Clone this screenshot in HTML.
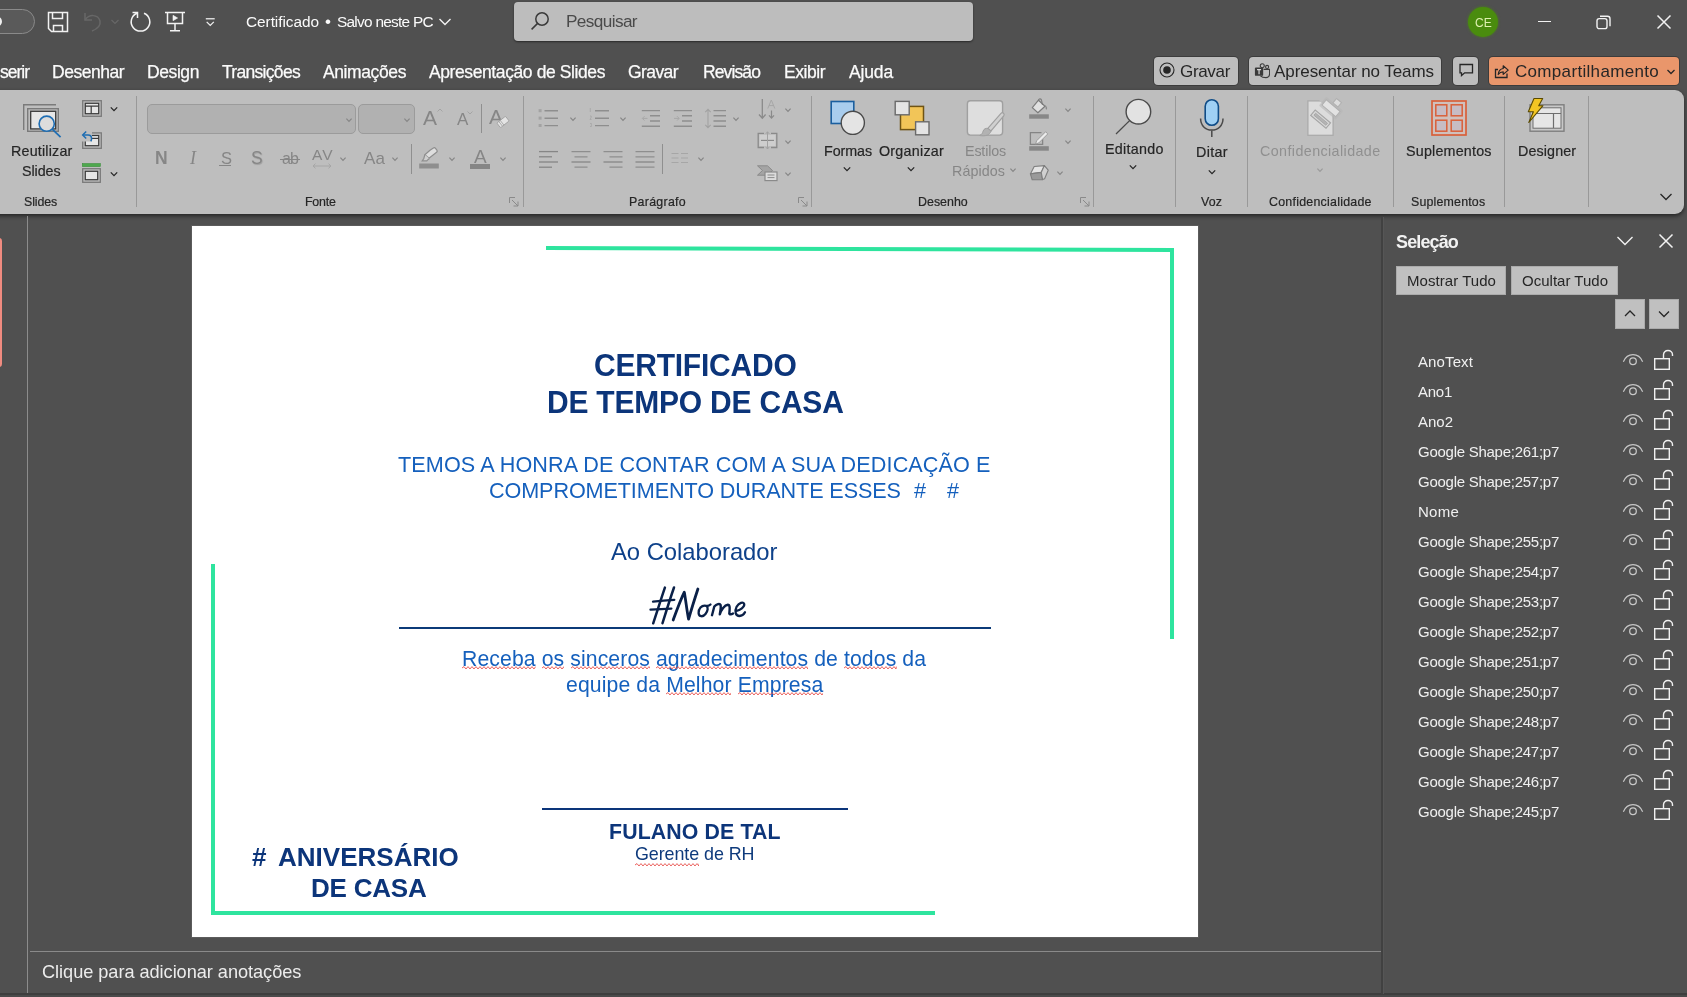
<!DOCTYPE html>
<html><head><meta charset="utf-8"><title>Certificado - PowerPoint</title>
<style>
html,body{margin:0;padding:0;background:#505050;}
body{width:1687px;height:997px;position:relative;overflow:hidden;font-family:"Liberation Sans",sans-serif;-webkit-font-smoothing:antialiased;}
.t{will-change:transform;}
.r{position:absolute;display:block;}
.t{position:absolute;white-space:nowrap;display:block;}
</style></head><body>
<div class="r" style="left:0px;top:0px;width:1687px;height:997px;background:#505050;"></div>
<div class="r" style="left:-10px;top:90px;width:1694px;height:123.7px;background:#bebebe;border-radius:0 9px 9px 0;box-shadow:0 2px 4px rgba(0,0,0,.55);"></div>
<div class="r" style="left:-30px;top:9px;width:64.5px;height:24.5px;background:transparent;border:1px solid #8a8a8a;border-radius:13px;box-sizing:border-box;background:#5a5a5a;"></div>
<div class="r" style="left:-6px;top:17px;width:8px;height:9px;background:#f0f0f0;border-radius:50%;"></div>
<svg class="r" style="left:47px;top:11px;" width="22" height="22" viewBox="0 0 22 22" fill="none"><path d="M1.5 1.5h19v19h-16l-3-3z" stroke="#f2f2f2" stroke-width="1.5"/><path d="M5.5 1.5v6h10v-6M6.5 20.5v-6h9v6" stroke="#f2f2f2" stroke-width="1.5"/></svg>
<svg class="r" style="left:82px;top:11px;" width="24" height="22" viewBox="0 0 24 22" fill="none"><path d="M3 2v7h7" stroke="#676767" stroke-width="1.5"/><path d="M3 9c4-6 13-6 15 1c1 5-3 8-8 10" stroke="#676767" stroke-width="1.5"/></svg>
<svg class="r" style="left:110px;top:18px;" width="10" height="8" viewBox="0 0 10 8" fill="none"><path d="M1.5 2l3.5 3.5l3.5-3.5" stroke="#676767" stroke-width="1.2"/></svg>
<svg class="r" style="left:129px;top:10px;" width="24" height="24" viewBox="0 0 24 24" fill="none"><path d="M8 3.2a9.3 9.3 0 1 0 7 0" stroke="#f2f2f2" stroke-width="1.5"/><path d="M3.5 2.5h5v5.5" stroke="#f2f2f2" stroke-width="1.5"/></svg>
<svg class="r" style="left:164px;top:11px;" width="22" height="22" viewBox="0 0 22 22" fill="none"><path d="M1 1.5h20M3.5 1.5v11h15v-11M11 12.5v7M6 19.7h10" stroke="#f2f2f2" stroke-width="1.5"/><path d="M9 4.300l4.600 2.700l-4.600 2.700z" fill="#f2f2f2" stroke="#f2f2f2" stroke-width=".6"/></svg>
<svg class="r" style="left:204px;top:17px;" width="12.5" height="10.7" viewBox="0 0 14 12" fill="none"><path d="M2 2h10" stroke="#f2f2f2" stroke-width="1.4"/><path d="M3 5.5l4 4l4-4" stroke="#f2f2f2" stroke-width="1.4"/></svg>
<span class="t" style="left:246.00px;top:13.30px;font-size:15.4px;line-height:18px;color:#fbfbfb;letter-spacing:-0.055px;">Certificado</span>
<span class="t" style="left:324.50px;top:12.30px;font-size:17px;line-height:20px;color:#fbfbfb;">•</span>
<span class="t" style="left:337.00px;top:13.30px;font-size:15.4px;line-height:18px;color:#fbfbfb;letter-spacing:-0.725px;">Salvo neste PC</span>
<svg class="r" style="left:438px;top:17px;" width="14" height="10" viewBox="0 0 14 10" fill="none"><path d="M1.5 2l5.5 5.5l5.5-5.5" stroke="#f2f2f2" stroke-width="1.4"/></svg>
<div class="r" style="left:514px;top:2px;width:459px;height:39px;background:#bdbdbd;border-radius:4px;box-shadow:0 1px 2px rgba(0,0,0,.5);"></div>
<svg class="r" style="left:529px;top:10px;" width="22" height="22" viewBox="0 0 22 22" fill="none"><circle cx="13" cy="9" r="6.2" stroke="#3a3a3a" stroke-width="1.5"/><path d="M8.6 13.4l-6 6" stroke="#3a3a3a" stroke-width="1.5"/></svg>
<span class="t" style="left:566.00px;top:11.30px;font-size:17.2px;line-height:21px;color:#4a4a4a;letter-spacing:-0.609px;">Pesquisar</span>
<div class="r" style="left:1468px;top:7px;width:30px;height:30px;background:#4a8c0e;border-radius:50%;box-shadow:0 0 3px rgba(74,140,14,.8);"></div>
<span class="t" style="left:1475.16px;top:15.80px;font-size:12px;line-height:14px;color:#def0b0;">CE</span>
<div class="r" style="left:1538px;top:20.5px;width:12.5px;height:1.1px;background:#f2f2f2;"></div>
<svg class="r" style="left:1596px;top:15px;" width="16" height="15" viewBox="0 0 16 15" fill="none"><rect x="1" y="3.6" width="10" height="10" rx="2.2" stroke="#f2f2f2" stroke-width="1.4"/><path d="M4 1.2h7.5a2.5 2.5 0 0 1 2.5 2.5v7.5" stroke="#f2f2f2" stroke-width="1.4"/></svg>
<svg class="r" style="left:1656px;top:14px;" width="16" height="16" viewBox="0 0 16 16" fill="none"><path d="M1.5 1.5l13 13M14.5 1.5l-13 13" stroke="#f2f2f2" stroke-width="1.5"/></svg>
<span class="t" style="left:0.00px;top:61.70px;font-size:17.5px;line-height:21px;color:#fbfbfb;letter-spacing:-1.005px;-webkit-text-stroke:0.250px #fbfbfb;">serir</span>
<span class="t" style="left:52.00px;top:61.70px;font-size:17.5px;line-height:21px;color:#fbfbfb;letter-spacing:-0.485px;-webkit-text-stroke:0.250px #fbfbfb;">Desenhar</span>
<span class="t" style="left:147.00px;top:61.70px;font-size:17.5px;line-height:21px;color:#fbfbfb;letter-spacing:-0.412px;-webkit-text-stroke:0.250px #fbfbfb;">Design</span>
<span class="t" style="left:222.00px;top:61.70px;font-size:17.5px;line-height:21px;color:#fbfbfb;letter-spacing:-0.694px;-webkit-text-stroke:0.250px #fbfbfb;">Transições</span>
<span class="t" style="left:323.00px;top:61.70px;font-size:17.5px;line-height:21px;color:#fbfbfb;letter-spacing:-0.397px;-webkit-text-stroke:0.250px #fbfbfb;">Animações</span>
<span class="t" style="left:429.00px;top:61.70px;font-size:17.5px;line-height:21px;color:#fbfbfb;letter-spacing:-0.402px;-webkit-text-stroke:0.250px #fbfbfb;">Apresentação de Slides</span>
<span class="t" style="left:628.00px;top:61.70px;font-size:17.5px;line-height:21px;color:#fbfbfb;letter-spacing:-0.581px;-webkit-text-stroke:0.250px #fbfbfb;">Gravar</span>
<span class="t" style="left:703.00px;top:61.70px;font-size:17.5px;line-height:21px;color:#fbfbfb;letter-spacing:-0.889px;-webkit-text-stroke:0.250px #fbfbfb;">Revisão</span>
<span class="t" style="left:784.00px;top:61.70px;font-size:17.5px;line-height:21px;color:#fbfbfb;letter-spacing:-0.460px;-webkit-text-stroke:0.250px #fbfbfb;">Exibir</span>
<span class="t" style="left:849.00px;top:61.70px;font-size:17.5px;line-height:21px;color:#fbfbfb;letter-spacing:-0.152px;-webkit-text-stroke:0.250px #fbfbfb;">Ajuda</span>
<div class="r" style="left:1154px;top:57px;width:84px;height:28px;background:#bdbdbd;border-radius:4px;box-shadow:0 0 0 1px rgba(0,0,0,.25);"></div>
<svg class="r" style="left:1158.2px;top:61.4px;" width="18" height="18" viewBox="0 0 18 18" fill="none"><circle cx="9" cy="9" r="7" stroke="#262626" stroke-width="1.1"/><circle cx="9" cy="9" r="3.8" fill="#262626"/></svg>
<span class="t" style="left:1180.00px;top:62.00px;font-size:17px;line-height:20px;color:#262626;letter-spacing:-0.326px;">Gravar</span>
<div class="r" style="left:1249px;top:57px;width:192px;height:28px;background:#bdbdbd;border-radius:4px;box-shadow:0 0 0 1px rgba(0,0,0,.25);"></div>
<svg class="r" style="left:1253.5px;top:62.5px;" width="16.5" height="16.5" viewBox="0 0 18 18" fill="none"><rect x="1" y="5" width="9" height="9" rx="1" fill="#3a3a3a"/><path d="M3.3 7.3h4.4M5.5 7.3v5" stroke="#d8d8d8" stroke-width="1.3"/><circle cx="9" cy="3" r="2.2" stroke="#3a3a3a" stroke-width="1.2"/><circle cx="14.3" cy="4.3" r="1.7" stroke="#3a3a3a" stroke-width="1.2"/><path d="M10.5 7h6.5v4.5c0 3-2 4.5-4 4.5c-2.5 0-5-1-6-2" stroke="#3a3a3a" stroke-width="1.2"/></svg>
<span class="t" style="left:1274.00px;top:62.00px;font-size:17px;line-height:20px;color:#262626;letter-spacing:-0.067px;">Apresentar no Teams</span>
<div class="r" style="left:1453px;top:57px;width:25px;height:28px;background:#bdbdbd;border-radius:4px;box-shadow:0 0 0 1px rgba(0,0,0,.25);"></div>
<svg class="r" style="left:1457.5px;top:63px;" width="17" height="15" viewBox="0 0 17 15" fill="none"><path d="M2 1.5h12.500v8.300h-7.800l-3.200 2.800v-2.800h-1.500z" stroke="#262626" stroke-width="1.3"/></svg>
<div class="r" style="left:1489px;top:57px;width:190px;height:28px;background:#e9966b;border-radius:4px;box-shadow:0 0 0 1px rgba(0,0,0,.25);"></div>
<svg class="r" style="left:1493px;top:61px;" width="18" height="18" viewBox="0 0 18 18" fill="none"><path d="M5 8.500h-2.500v8h11.500v-4" stroke="#262626" stroke-width="1.300"/><path d="M5.200 13.500c.3-3.600 2-5.600 5-6v-2.700l5 4.300l-5 4.300v-2.600c-2.200 0-3.700.8-5 2.700z" stroke="#262626" stroke-width="1.200" stroke-linejoin="round"/></svg>
<span class="t" style="left:1515.00px;top:62.00px;font-size:17px;line-height:20px;color:#262626;letter-spacing:0.319px;">Compartilhamento</span>
<svg class="r" style="left:1665.5px;top:68px;" width="10" height="8" viewBox="0 0 10 8" fill="none"><path d="M1.5 2l3.5 3.5l3.5-3.5" stroke="#262626" stroke-width="1.3"/></svg>
<svg class="r" style="left:22px;top:103px;" width="42" height="37" viewBox="0 0 42 37" fill="none"><path d="M1.7 27V1.7H34" stroke="#7a7a7a" stroke-width="1.4"/><rect x="5.7" y="5.7" width="30.6" height="22.6" stroke="#7a7a7a" stroke-width="1.4" fill="#bebebe"/><rect x="8.7" y="8.3" width="25" height="17.6" stroke="#3a3a3a" stroke-width="1.3" fill="#e6e6e6"/><circle cx="24.7" cy="20.7" r="7.6" fill="#dcdcdc" stroke="#1e6db3" stroke-width="1.6"/><path d="M30.2 26.2L38.6 34.2" stroke="#1e6db3" stroke-width="1.7"/></svg>
<span class="t" style="left:10.60px;top:142.70px;font-size:14.3px;line-height:17px;color:#262626;letter-spacing:0.190px;-webkit-text-stroke:0.200px #262626;">Reutilizar</span>
<span class="t" style="left:22.30px;top:162.50px;font-size:14.3px;line-height:17px;color:#262626;letter-spacing:-0.075px;-webkit-text-stroke:0.200px #262626;">Slides</span>
<span class="t" style="left:23.50px;top:195.20px;font-size:12.4px;line-height:15px;color:#262626;letter-spacing:-0.129px;-webkit-text-stroke:0.200px #262626;">Slides</span>
<svg class="r" style="left:82px;top:100px;" width="20" height="17" viewBox="0 0 20 17" fill="none"><rect x="0.7" y="0.7" width="18.6" height="15.6" stroke="#7a7a7a" stroke-width="1.3"/><rect x="3.3" y="3.3" width="13.4" height="10.4" fill="#e6e6e6" stroke="#3a3a3a" stroke-width="1.2"/><path d="M3.3 6.2H16.7M9.2 6.2V13.7" stroke="#3a3a3a" stroke-width="1.2"/></svg>
<svg class="r" style="left:107.5px;top:105.3px;" width="12" height="8" viewBox="0 0 12 8" fill="none"><path d="M2.8 2.4L6 5.6L9.2 2.4" stroke="#262626" stroke-width="1.3"/></svg>
<svg class="r" style="left:81px;top:130px;" width="22" height="19" viewBox="0 0 22 19" fill="none"><rect x="1.7" y="2.9" width="18.6" height="15.4" stroke="#7a7a7a" stroke-width="1.3"/><rect x="4.3" y="5.5" width="13.4" height="10.2" fill="#e6e6e6" stroke="#3a3a3a" stroke-width="1.2"/><path d="M4.3 8.4H17.7" stroke="#3a3a3a" stroke-width="1.2"/><rect x="0" y="0" width="11" height="11.5" fill="#bebebe"/><path d="M5.2 1.5L1.7 5L5.2 8.5" stroke="#1e6db3" stroke-width="1.5"/><path d="M1.9 5H7c2.6 0 3.6 2 3.6 3.7c0 1-.3 1.8-.9 2.6" stroke="#1e6db3" stroke-width="1.5"/></svg>
<svg class="r" style="left:82px;top:163px;" width="19" height="20" viewBox="0 0 19 20" fill="none"><rect x="0.3" y="0.6" width="18" height="3" fill="#4ea84e" stroke="#3a8f3a" stroke-width=".6"/><rect x="0.7" y="5.7" width="17.6" height="13.6" stroke="#7a7a7a" stroke-width="1.3"/><rect x="3.3" y="8.3" width="12.4" height="8.4" fill="#e6e6e6" stroke="#3a3a3a" stroke-width="1.2"/></svg>
<svg class="r" style="left:107.5px;top:169.5px;" width="12" height="8" viewBox="0 0 12 8" fill="none"><path d="M2.8 2.4L6 5.6L9.2 2.4" stroke="#262626" stroke-width="1.3"/></svg>
<div class="r" style="left:136.1px;top:96px;width:1px;height:111px;background:#999999;"></div>
<div class="r" style="left:147px;top:104px;width:209px;height:30px;background:#b1b1b1;border:1px solid #9b9b9b;border-radius:5px;box-sizing:border-box;"></div>
<svg class="r" style="left:342.5px;top:115.5px;" width="12" height="8" viewBox="0 0 12 8" fill="none"><path d="M3.4 2.7L6 5.3L8.6 2.7" stroke="#868686" stroke-width="1.2"/></svg>
<div class="r" style="left:358px;top:104px;width:57px;height:30px;background:#b1b1b1;border:1px solid #9b9b9b;border-radius:5px;box-sizing:border-box;"></div>
<svg class="r" style="left:401px;top:115.5px;" width="12" height="8" viewBox="0 0 12 8" fill="none"><path d="M3.4 2.7L6 5.3L8.6 2.7" stroke="#868686" stroke-width="1.2"/></svg>
<span class="t" style="left:422.60px;top:104.50px;font-size:21px;line-height:25px;color:#868686;">A</span>
<svg class="r" style="left:436px;top:107px;" width="8" height="6" viewBox="0 0 8 6" fill="none"><path d="M1.5 4.5L4 2L6.5 4.5" stroke="#a4a4a4" stroke-width="1"/></svg>
<span class="t" style="left:456.50px;top:109.50px;font-size:17px;line-height:20px;color:#868686;">A</span>
<svg class="r" style="left:466px;top:110px;" width="8" height="6" viewBox="0 0 8 6" fill="none"><path d="M1.5 1.5L4 4L6.5 1.5" stroke="#a4a4a4" stroke-width="1"/></svg>
<div class="r" style="left:480.9px;top:104px;width:1px;height:29px;background:#8f8f8f;"></div>
<span class="t" style="left:488.50px;top:103.80px;font-size:21px;line-height:25px;color:#868686;">A</span>
<svg class="r" style="left:496px;top:115px;" width="14" height="14" viewBox="0 0 14 14" fill="none"><g transform="rotate(-38 7 7)"><rect x="1.500" y="4" width="11" height="6" rx="1" fill="#e4e4e4" stroke="#a2a2a2" stroke-width=".9"/><path d="M4 4V10M5.800 4V10" stroke="#a2a2a2" stroke-width=".8"/></g></svg>
<span class="t" style="left:154.50px;top:147.70px;font-size:17.5px;line-height:21px;color:#868686;font-weight:700;">N</span>
<span class="t" style="left:190.00px;top:147.20px;font-size:18px;line-height:22px;color:#868686;font-style:italic;font-family:'Liberation Serif', serif;">I</span>
<span class="t" style="left:220.50px;top:148.00px;font-size:16.5px;line-height:20px;color:#868686;">S</span>
<div class="r" style="left:219px;top:165px;width:12px;height:1.3px;background:#868686;"></div>
<span class="t" style="left:250.50px;top:147.70px;font-size:17.5px;line-height:21px;color:#868686;text-shadow:0.700px 0.700px 0.800px rgba(100,100,100,.35);">S</span>
<span class="t" style="left:282.00px;top:149.30px;font-size:16px;line-height:19px;color:#868686;letter-spacing:-0.899px;">ab</span>
<div class="r" style="left:280px;top:159.2px;width:20px;height:1.2px;background:#868686;"></div>
<span class="t" style="left:311.50px;top:145.30px;font-size:15.5px;line-height:19px;color:#868686;letter-spacing:0.987px;">AV</span>
<svg class="r" style="left:312px;top:162.5px;" width="20" height="6" viewBox="0 0 20 6" fill="none"><path d="M1 3H19M3.5 0.7L1 3L3.5 5.3M16.5 0.7L19 3L16.5 5.3" stroke="#a6a6a6" stroke-width="1"/></svg>
<svg class="r" style="left:337.4px;top:154.8px;" width="12" height="8" viewBox="0 0 12 8" fill="none"><path d="M3.4 2.7L6 5.3L8.6 2.7" stroke="#868686" stroke-width="1.2"/></svg>
<span class="t" style="left:364.00px;top:148.50px;font-size:17px;line-height:20px;color:#868686;letter-spacing:0.103px;">Aa</span>
<svg class="r" style="left:389.4px;top:154.8px;" width="12" height="8" viewBox="0 0 12 8" fill="none"><path d="M3.4 2.7L6 5.3L8.6 2.7" stroke="#868686" stroke-width="1.2"/></svg>
<div class="r" style="left:410.7px;top:144px;width:1px;height:30px;background:#8f8f8f;"></div>
<svg class="r" style="left:418px;top:147px;" width="22" height="23" viewBox="0 0 22 23" fill="none"><path d="M12 3.2l3.4-2.2c.8-.5 1.5-.4 2.1.3l1.4 1.9c.5.8.4 1.5-.3 2l-7.6 6.1l-4.2-3.5z" fill="#dedede" stroke="#8e8e8e" stroke-width="1.2"/><path d="M6.8 7.8l-1 3.7l-1.6 2.3h4.6l1.4-1.4l1.2-.9" stroke="#8e8e8e" stroke-width="1.2" fill="#cfcfcf"/><rect x="1.2" y="16.5" width="19.6" height="5" fill="#8e8e8e"/></svg>
<svg class="r" style="left:446px;top:154.8px;" width="12" height="8" viewBox="0 0 12 8" fill="none"><path d="M3.4 2.7L6 5.3L8.6 2.7" stroke="#868686" stroke-width="1.2"/></svg>
<span class="t" style="left:473.60px;top:144.70px;font-size:19px;line-height:23px;color:#868686;">A</span>
<div class="r" style="left:470px;top:164px;width:20px;height:5px;background:#868686;"></div>
<svg class="r" style="left:497.4px;top:154.8px;" width="12" height="8" viewBox="0 0 12 8" fill="none"><path d="M3.4 2.7L6 5.3L8.6 2.7" stroke="#868686" stroke-width="1.2"/></svg>
<span class="t" style="left:304.60px;top:195.20px;font-size:12.4px;line-height:15px;color:#262626;letter-spacing:-0.202px;-webkit-text-stroke:0.200px #262626;">Fonte</span>
<svg class="r" style="left:509px;top:197px;" width="10" height="10" viewBox="0 0 10 10" fill="none"><path d="M0.5 6V0.5H6" stroke="#8a8a8a" stroke-width="1"/><path d="M3 3L9 9M9 4.5V9H4.5" stroke="#8a8a8a" stroke-width="1"/></svg>
<div class="r" style="left:523.2px;top:96px;width:1px;height:111px;background:#999999;"></div>
<svg class="r" style="left:538px;top:108px;" width="22" height="21" viewBox="0 0 22 21" fill="none"><rect x="0.6" y="1.2" width="3" height="3" fill="#a2a2a2"/><rect x="0.6" y="8.6" width="3" height="3" fill="#a2a2a2"/><rect x="0.6" y="16" width="3" height="3" fill="#a2a2a2"/><path d="M6.5 2.8H20M6.5 10.2H20M6.5 17.6H20" stroke="#8e8e8e" stroke-width="1.4"/></svg>
<svg class="r" style="left:566.5px;top:115.2px;" width="12" height="8" viewBox="0 0 12 8" fill="none"><path d="M3.4 2.7L6 5.3L8.6 2.7" stroke="#868686" stroke-width="1.2"/></svg>
<svg class="r" style="left:588px;top:107px;" width="22" height="23" viewBox="0 0 22 23" fill="none"><path d="M2.3 1V5M2 9h1.2v1.2L2 12.5h1.5M2 16.5h1.4v3H2" stroke="#a8a8a8" stroke-width=".9"/><path d="M7 3.8H21M7 11.2H21M7 18.6H21" stroke="#8e8e8e" stroke-width="1.4"/></svg>
<svg class="r" style="left:617.1px;top:115.2px;" width="12" height="8" viewBox="0 0 12 8" fill="none"><path d="M3.4 2.7L6 5.3L8.6 2.7" stroke="#868686" stroke-width="1.2"/></svg>
<svg class="r" style="left:641px;top:108px;" width="20" height="21" viewBox="0 0 20 21" fill="none"><path d="M0.8 2.6H19M9 7.8H19M9 13H19M0.8 18.2H19" stroke="#8e8e8e" stroke-width="1.4"/><path d="M6.5 10.4H1.5M3.5 8.2L1.3 10.4L3.5 12.6" stroke="#a8a8a8" stroke-width="1"/></svg>
<svg class="r" style="left:673px;top:108px;" width="20" height="21" viewBox="0 0 20 21" fill="none"><path d="M0.8 2.6H19M9 7.8H19M9 13H19M0.8 18.2H19" stroke="#8e8e8e" stroke-width="1.4"/><path d="M1 10.4H6M4 8.2L6.2 10.4L4 12.6" stroke="#a8a8a8" stroke-width="1"/></svg>
<svg class="r" style="left:704px;top:107px;" width="23" height="23" viewBox="0 0 23 23" fill="none"><path d="M4 2.5V20.5M1.3 5.2L4 2.3L6.7 5.2M1.3 17.8L4 20.7L6.7 17.8" stroke="#a2a2a2" stroke-width="1.1"/><path d="M9.5 3.6H22M9.5 8.8H22M9.5 14H22M9.5 19.2H22" stroke="#8e8e8e" stroke-width="1.4"/></svg>
<svg class="r" style="left:730px;top:115.2px;" width="12" height="8" viewBox="0 0 12 8" fill="none"><path d="M3.4 2.7L6 5.3L8.6 2.7" stroke="#868686" stroke-width="1.2"/></svg>
<svg class="r" style="left:758px;top:98px;" width="20" height="22" viewBox="0 0 20 22" fill="none"><path d="M4.3 1V20M1 16.5L4.3 20.2L7.6 16.5" stroke="#8a8a8a" stroke-width="1.3"/><path d="M13.5 12.5V20M11 17.3L13.5 20.2L16 17.3" stroke="#8a8a8a" stroke-width="1.2"/><path d="M9.8 10.5L13.3 2L16.8 10.5M11 7.6H15.6" stroke="#a6a6a6" stroke-width="1"/></svg>
<svg class="r" style="left:782.2px;top:105.6px;" width="12" height="8" viewBox="0 0 12 8" fill="none"><path d="M3.4 2.7L6 5.3L8.6 2.7" stroke="#868686" stroke-width="1.2"/></svg>
<svg class="r" style="left:757px;top:131px;" width="21" height="19" viewBox="0 0 21 19" fill="none"><path d="M7 2.3H1.2V16.5H7M14 2.3H19.8V16.5H14" stroke="#8a8a8a" stroke-width="1.3"/><rect x="2.5" y="4" width="16" height="11" fill="#d4d4d4" opacity=".7"/><path d="M4 9.4H17" stroke="#8a8a8a" stroke-width="1.2"/><path d="M10.5 0.8V18M8.6 3L10.5 0.8L12.4 3M8.6 15.8L10.5 18L12.4 15.8" stroke="#a2a2a2" stroke-width="1"/></svg>
<svg class="r" style="left:782.2px;top:137.6px;" width="12" height="8" viewBox="0 0 12 8" fill="none"><path d="M3.4 2.7L6 5.3L8.6 2.7" stroke="#868686" stroke-width="1.2"/></svg>
<svg class="r" style="left:756px;top:164px;" width="22" height="18" viewBox="0 0 22 18" fill="none"><path d="M1.5 1.8H11.5L16.5 6.5L11.5 11.2H1.5L6.5 6.5Z" fill="#a4a4a4" stroke="#8a8a8a" stroke-width="1"/><rect x="9" y="8" width="12" height="8.6" fill="#dcdcdc" stroke="#8a8a8a" stroke-width="1.2"/><path d="M11.5 11H18.5M11.5 13.6H18.5" stroke="#8a8a8a" stroke-width="1"/></svg>
<svg class="r" style="left:782.2px;top:169.6px;" width="12" height="8" viewBox="0 0 12 8" fill="none"><path d="M3.4 2.7L6 5.3L8.6 2.7" stroke="#868686" stroke-width="1.2"/></svg>
<svg class="r" style="left:539px;top:149.5px;" width="20" height="19" viewBox="0 0 20 19" fill="none"><path d="M0 1.6H19" stroke="#868686" stroke-width="1.3"/><path d="M0 6.8H13" stroke="#868686" stroke-width="1.3"/><path d="M0 12H19" stroke="#868686" stroke-width="1.3"/><path d="M0 17.2H13" stroke="#868686" stroke-width="1.3"/></svg>
<svg class="r" style="left:571px;top:149.5px;" width="20" height="19" viewBox="0 0 20 19" fill="none"><path d="M0.5 1.6H19.5M3.5 6.8H16.5M0.5 12H19.5M3.5 17.2H16.5" stroke="#8e8e8e" stroke-width="1.3"/></svg>
<svg class="r" style="left:603px;top:149.5px;" width="20" height="19" viewBox="0 0 20 19" fill="none"><path d="M0.5 1.6H19.5M6.5 6.8H19.5M0.5 12H19.5M6.5 17.2H19.5" stroke="#8e8e8e" stroke-width="1.3"/></svg>
<svg class="r" style="left:635px;top:149.5px;" width="20" height="19" viewBox="0 0 20 19" fill="none"><path d="M0.5 1.6H19.5M0.5 6.8H19.5M0.5 12H19.5M0.5 17.2H19.5" stroke="#8e8e8e" stroke-width="1.3"/></svg>
<div class="r" style="left:661.8px;top:144px;width:1px;height:30px;background:#8f8f8f;"></div>
<svg class="r" style="left:671px;top:152px;" width="18" height="12" viewBox="0 0 18 12" fill="none"><path d="M0.5 1.5H7.5M10 1.5H17M0.5 6H7.5M10 6H17M0.5 10.5H7.5M10 10.5H17" stroke="#a6a6a6" stroke-width="1.1"/></svg>
<svg class="r" style="left:695.4px;top:154.8px;" width="12" height="8" viewBox="0 0 12 8" fill="none"><path d="M3.4 2.7L6 5.3L8.6 2.7" stroke="#868686" stroke-width="1.2"/></svg>
<span class="t" style="left:628.50px;top:195.20px;font-size:12.4px;line-height:15px;color:#262626;letter-spacing:0.283px;-webkit-text-stroke:0.200px #262626;">Parágrafo</span>
<svg class="r" style="left:797.5px;top:197px;" width="10" height="10" viewBox="0 0 10 10" fill="none"><path d="M0.5 6V0.5H6" stroke="#8a8a8a" stroke-width="1"/><path d="M3 3L9 9M9 4.5V9H4.5" stroke="#8a8a8a" stroke-width="1"/></svg>
<div class="r" style="left:810.9px;top:96px;width:1px;height:111px;background:#999999;"></div>
<svg class="r" style="left:829px;top:99px;" width="38" height="38" viewBox="0 0 38 38" fill="none"><rect x="2.2" y="2.5" width="22.6" height="22" fill="#a9cdee" stroke="#1b5f9f" stroke-width="1.6"/><circle cx="23.8" cy="23.8" r="11.6" fill="#e4e4e4" stroke="#4a4a4a" stroke-width="1.4"/></svg>
<span class="t" style="left:823.80px;top:142.50px;font-size:14.3px;line-height:17px;color:#262626;letter-spacing:-0.078px;-webkit-text-stroke:0.200px #262626;">Formas</span>
<svg class="r" style="left:841.3px;top:165.2px;" width="12" height="8" viewBox="0 0 12 8" fill="none"><path d="M2.8 2.4L6 5.6L9.2 2.4" stroke="#262626" stroke-width="1.3"/></svg>
<svg class="r" style="left:893px;top:99px;" width="38" height="38" viewBox="0 0 38 38" fill="none"><rect x="7.5" y="7.4" width="23" height="23.2" fill="#f2c558" stroke="#6f5414" stroke-width="1.5"/><rect x="2.2" y="2.4" width="14" height="13.4" fill="#e4e4e4" stroke="#6a6a6a" stroke-width="1.4"/><rect x="22.6" y="22.8" width="13.4" height="13" fill="#e4e4e4" stroke="#6a6a6a" stroke-width="1.4"/></svg>
<span class="t" style="left:879.20px;top:142.50px;font-size:14.3px;line-height:17px;color:#262626;letter-spacing:0.246px;-webkit-text-stroke:0.200px #262626;">Organizar</span>
<svg class="r" style="left:905.4px;top:165.2px;" width="12" height="8" viewBox="0 0 12 8" fill="none"><path d="M2.8 2.4L6 5.6L9.2 2.4" stroke="#262626" stroke-width="1.3"/></svg>
<svg class="r" style="left:966px;top:99px;" width="40" height="38" viewBox="0 0 40 38" fill="none"><rect x="1.400" y="1.700" width="35.200" height="34.400" rx="3" fill="#dedede" stroke="#a0a0a0" stroke-width="1.400"/><path d="M37.5 14.2c.9.7.9 1.6.2 2.6L25 32l-3.2-2.6L35 14.4c.8-.8 1.7-.9 2.5-.2z" fill="#d0d0d0" stroke="#a0a0a0" stroke-width="1.2"/><path d="M22 29.5l3 2.6c-1 3.5-5 5.6-11.5 4.4c2.6-1 3-2.6 3.6-4.4c.8-2.2 2.6-3.2 4.900-2.600z" fill="#b2b2b2" stroke="#a0a0a0" stroke-width="1"/></svg>
<span class="t" style="left:964.70px;top:142.50px;font-size:14.3px;line-height:17px;color:#868686;letter-spacing:-0.160px;">Estilos</span>
<span class="t" style="left:951.70px;top:162.50px;font-size:14.3px;line-height:17px;color:#868686;letter-spacing:0.076px;">Rápidos</span>
<svg class="r" style="left:1006.7px;top:166px;" width="12" height="8" viewBox="0 0 12 8" fill="none"><path d="M3.4 2.7L6 5.3L8.6 2.7" stroke="#868686" stroke-width="1.2"/></svg>
<svg class="r" style="left:1028px;top:97px;" width="22" height="23" viewBox="0 0 22 23" fill="none"><path d="M4.300 10.600L10.500 3.200L17 9.200L9.900 15.800Z" fill="#e0e0e0" stroke="#7c7c7c" stroke-width="1.200" stroke-linejoin="round"/><path d="M10.300 3.600C10.600 1.400 13.200 1.300 13.500 3.200L14.500 8" stroke="#7c7c7c" stroke-width="1.100"/><path d="M17.300 8.600c1.200 1.600 1.500 2.800.9 3.800" stroke="#8a8a8a" stroke-width="1.300"/><rect x="1.200" y="17.300" width="19.600" height="4.400" fill="#878787"/></svg>
<svg class="r" style="left:1062.2px;top:105.6px;" width="12" height="8" viewBox="0 0 12 8" fill="none"><path d="M3.4 2.7L6 5.3L8.6 2.7" stroke="#868686" stroke-width="1.2"/></svg>
<svg class="r" style="left:1028px;top:130px;" width="22" height="22" viewBox="0 0 22 22" fill="none"><path d="M13.500 2.600H2.400v11.800h12.200V9" stroke="#858585" stroke-width="1.300"/><path d="M17.600 1.800l2.200 2.100l-9 9l-3.300 1.200l1.100-3.300z" fill="#ececec" stroke="#9a9a9a" stroke-width="1"/><rect x="1.200" y="16.200" width="19.600" height="4.500" fill="#878787"/></svg>
<svg class="r" style="left:1062.2px;top:137.6px;" width="12" height="8" viewBox="0 0 12 8" fill="none"><path d="M3.4 2.7L6 5.3L8.6 2.7" stroke="#868686" stroke-width="1.2"/></svg>
<svg class="r" style="left:1028px;top:164px;" width="22" height="18" viewBox="0 0 22 18" fill="none"><path d="M6.200 2.500L16.400 1.600L13.200 8.400L2.400 9.900Z" fill="#e4e4e4" stroke="#7e7e7e" stroke-width="1.100" stroke-linejoin="round"/><path d="M2.400 9.900L13.200 8.400L14.600 15.600L4.200 15.800Z" fill="#9a9a9a" stroke="#7e7e7e" stroke-width="1.100" stroke-linejoin="round"/><path d="M16.400 1.600L20.200 6.200L16.600 14.800L14.600 15.600L13.200 8.400Z" fill="#d0d0d0" stroke="#7e7e7e" stroke-width="1.100" stroke-linejoin="round"/></svg>
<svg class="r" style="left:1054.4px;top:169.4px;" width="12" height="8" viewBox="0 0 12 8" fill="none"><path d="M3.4 2.7L6 5.3L8.6 2.7" stroke="#868686" stroke-width="1.2"/></svg>
<span class="t" style="left:917.60px;top:195.20px;font-size:12.4px;line-height:15px;color:#262626;letter-spacing:0.023px;-webkit-text-stroke:0.200px #262626;">Desenho</span>
<svg class="r" style="left:1079.5px;top:197px;" width="10" height="10" viewBox="0 0 10 10" fill="none"><path d="M0.5 6V0.5H6" stroke="#8a8a8a" stroke-width="1"/><path d="M3 3L9 9M9 4.5V9H4.5" stroke="#8a8a8a" stroke-width="1"/></svg>
<div class="r" style="left:1092.8px;top:96px;width:1px;height:111px;background:#999999;"></div>
<svg class="r" style="left:1113px;top:97px;" width="42" height="40" viewBox="0 0 42 40" fill="none"><circle cx="25.400" cy="14.700" r="12.300" fill="#e2e2e2" stroke="#4a4a4a" stroke-width="1.400"/><path d="M16.600 23.600L3 37" stroke="#4a4a4a" stroke-width="1.300"/></svg>
<span class="t" style="left:1104.60px;top:140.50px;font-size:14.3px;line-height:17px;color:#262626;letter-spacing:0.281px;-webkit-text-stroke:0.200px #262626;">Editando</span>
<svg class="r" style="left:1127.2px;top:163.4px;" width="12" height="8" viewBox="0 0 12 8" fill="none"><path d="M2.8 2.4L6 5.6L9.2 2.4" stroke="#262626" stroke-width="1.3"/></svg>
<div class="r" style="left:1175.0px;top:96px;width:1px;height:111px;background:#999999;"></div>
<svg class="r" style="left:1198px;top:97px;" width="28" height="42" viewBox="0 0 28 42" fill="none"><rect x="7.200" y="2.700" width="13.200" height="25.600" rx="6.600" fill="#9fd0f4" stroke="#0f4c87" stroke-width="1.600"/><path d="M2.600 21.500c0 7 4.800 11.600 11.200 11.600s11.200-4.600 11.200-11.600" stroke="#4a4a4a" stroke-width="1.500"/><path d="M13.800 33.500V40" stroke="#4a4a4a" stroke-width="1.500"/></svg>
<span class="t" style="left:1195.80px;top:144.10px;font-size:14.3px;line-height:17px;color:#262626;letter-spacing:0.362px;-webkit-text-stroke:0.200px #262626;">Ditar</span>
<svg class="r" style="left:1205.5px;top:167.5px;" width="12" height="8" viewBox="0 0 12 8" fill="none"><path d="M2.8 2.4L6 5.6L9.2 2.4" stroke="#262626" stroke-width="1.3"/></svg>
<span class="t" style="left:1201.00px;top:195.20px;font-size:12.4px;line-height:15px;color:#262626;letter-spacing:0.106px;-webkit-text-stroke:0.200px #262626;">Voz</span>
<div class="r" style="left:1247.1px;top:96px;width:1px;height:111px;background:#999999;"></div>
<svg class="r" style="left:1305px;top:96px;" width="38" height="42" viewBox="0 0 38 42" fill="none"><rect x="2.900" y="4.900" width="25.200" height="34.400" fill="#dcdcdc" stroke="#ababab" stroke-width="1.300"/><path d="M14 4h15v15z" fill="#bebebe"/><g transform="rotate(40 15.600 23.100)"><rect x="5.600" y="19.600" width="20" height="7" fill="#d6d6d6" stroke="#a4a4a4" stroke-width="1.100"/><rect x="8" y="21.800" width="15.500" height="2.600" fill="#b4b4b4" stroke="#a4a4a4" stroke-width=".8"/></g><g transform="rotate(40 26 12.200)"><rect x="15" y="6.400" width="22" height="11.600" rx="1.500" fill="#b4b4b4" opacity=".55"/><rect x="17" y="8.800" width="18" height="6.800" fill="#e2e2e2" stroke="#b0b0b0" stroke-width="1"/><rect x="24" y="1.200" width="6.500" height="5.600" fill="#dcdcdc" stroke="#b0b0b0" stroke-width="1"/></g></svg>
<span class="t" style="left:1260.20px;top:142.50px;font-size:14.3px;line-height:17px;color:#909090;letter-spacing:0.407px;">Confidencialidade</span>
<svg class="r" style="left:1314.3px;top:165.5px;" width="12" height="8" viewBox="0 0 12 8" fill="none"><path d="M3.4 2.7L6 5.3L8.6 2.7" stroke="#9a9a9a" stroke-width="1.2"/></svg>
<span class="t" style="left:1268.70px;top:195.20px;font-size:12.4px;line-height:15px;color:#262626;letter-spacing:0.248px;-webkit-text-stroke:0.200px #262626;">Confidencialidade</span>
<div class="r" style="left:1393.1px;top:96px;width:1px;height:111px;background:#999999;"></div>
<svg class="r" style="left:1430px;top:99px;" width="38" height="38" viewBox="0 0 38 38" fill="none"><rect x="2" y="2" width="34" height="34" fill="#d0c0bc" stroke="#d9603a" stroke-width="1.700"/><rect x="5.800" y="5.800" width="11" height="11" fill="#c7bcc4" stroke="#d9603a" stroke-width="1.500"/><rect x="21.200" y="5.800" width="11" height="11" fill="#c7bcc4" stroke="#d9603a" stroke-width="1.500"/><rect x="5.800" y="21.200" width="11" height="11" fill="#c7bcc4" stroke="#d9603a" stroke-width="1.500"/><rect x="21.200" y="21.200" width="11" height="11" fill="#c7bcc4" stroke="#d9603a" stroke-width="1.500"/></svg>
<span class="t" style="left:1406.20px;top:142.50px;font-size:14.3px;line-height:17px;color:#262626;letter-spacing:0.203px;-webkit-text-stroke:0.200px #262626;">Suplementos</span>
<span class="t" style="left:1411.40px;top:195.20px;font-size:12.4px;line-height:15px;color:#262626;letter-spacing:0.175px;-webkit-text-stroke:0.200px #262626;">Suplementos</span>
<div class="r" style="left:1503.9px;top:96px;width:1px;height:111px;background:#999999;"></div>
<svg class="r" style="left:1526px;top:97px;" width="40" height="37" viewBox="0 0 40 37" fill="none"><rect x="4" y="7.800" width="34" height="26.400" fill="#c8c8c8" stroke="#7e7e7e" stroke-width="1.400"/><rect x="7" y="10.800" width="28" height="20.400" fill="#e6e6e6"/><path d="M7 16.500H35M27.500 16.500V31" stroke="#6e6e6e" stroke-width="1.200"/><rect x="7" y="10.800" width="28" height="20.400" stroke="#6e6e6e" stroke-width="1"/><path d="M8 1.500h8.700l-4 7.200h4.300L2.800 25.500l4.600-10.800H2.300z" fill="#f3c623" stroke="#5a4a00" stroke-width="1.100" stroke-linejoin="round"/></svg>
<span class="t" style="left:1517.70px;top:142.50px;font-size:14.3px;line-height:17px;color:#262626;letter-spacing:0.121px;-webkit-text-stroke:0.200px #262626;">Designer</span>
<div class="r" style="left:1588.0px;top:96px;width:1px;height:111px;background:#999999;"></div>
<svg class="r" style="left:1659px;top:192px;" width="14" height="10" viewBox="0 0 14 10" fill="none"><path d="M1.500 2L7 7.500L12.500 2" stroke="#262626" stroke-width="1.300"/></svg>
<div class="r" style="left:27px;top:216px;width:1px;height:779px;background:#8c8c8c;"></div>
<div class="r" style="left:-2px;top:238px;width:4px;height:128.5px;background:#f08b80;border-radius:0 3px 3px 0;"></div>
<div class="r" style="left:192px;top:226px;width:1006px;height:711px;background:#ffffff;box-shadow:0 0 0 1px #5c5c5c;"></div>
<svg class="r" style="left:546px;top:244px;" width="628" height="10" viewBox="0 0 628 10" fill="none"><path d="M0 2L628 4V8L0 6Z" fill="#2ee49e"/></svg>
<div class="r" style="left:1170px;top:248px;width:4px;height:390.5px;background:#2ee49e;"></div>
<div class="r" style="left:211px;top:564px;width:4px;height:351px;background:#2ee49e;"></div>
<div class="r" style="left:211px;top:911px;width:724px;height:4px;background:#2ee49e;"></div>
<span class="t" style="left:593.75px;top:347.30px;font-size:30px;line-height:36px;color:#0c357a;font-weight:700;letter-spacing:-0.226px;transform:scaleY(1.06);transform-origin:50% 50%;">CERTIFICADO</span>
<span class="t" style="left:547.00px;top:383.50px;font-size:30px;line-height:36px;color:#0c357a;font-weight:700;letter-spacing:-0.214px;transform:scaleY(1.06);transform-origin:50% 50%;">DE TEMPO DE CASA</span>
<span class="t" style="left:398.30px;top:452.00px;font-size:21.6px;line-height:26px;color:#1560bd;letter-spacing:0.113px;">TEMOS A HONRA DE CONTAR COM A SUA DEDICAÇÃO E</span>
<span class="t" style="left:489.00px;top:478.00px;font-size:21.6px;line-height:26px;color:#1560bd;letter-spacing:-0.098px;">COMPROMETIMENTO DURANTE ESSES</span>
<span class="t" style="left:913.50px;top:478.00px;font-size:21.6px;line-height:26px;color:#1560bd;">#</span>
<span class="t" style="left:946.50px;top:478.00px;font-size:21.6px;line-height:26px;color:#1560bd;">#</span>
<span class="t" style="left:611.30px;top:536.50px;font-size:23.8px;line-height:29px;color:#0e418a;letter-spacing:-0.015px;">Ao Colaborador</span>
<svg class="r" style="left:645px;top:582px;" width="105" height="46" viewBox="645 582 105 46" fill="none"><g stroke="#0a2048" stroke-linecap="round" stroke-linejoin="round" fill="none"><path d="M664.9 587.6C661 599 657 612 653.2 623.3" stroke-width="2.5"/><path d="M674 587.5C670 599 666.3 611 662.5 623.2" stroke-width="2.5"/><path d="M653 601.7C660 600.8 667 600.2 674.3 599.9" stroke-width="2.3"/><path d="M650.5 609.7C657 609.2 664 608.8 671.4 608.6" stroke-width="2.3"/><path d="M673.2 620C676.500 611 680.500 600 684.300 592.200C685.800 600 686.800 610.500 688.600 619.200C691.300 609.500 694.800 598.500 697.900 589" stroke-width="2.800"/><path d="M706.300 605.800C701.500 604.500 698.200 609.200 698.600 613.200C699 617 703 617.200 705.500 614C707.800 611 708.600 607.200 706.300 605.800C708 606 709.500 605.500 710.500 604.500" stroke-width="2.300"/><path d="M712 615.200C712.800 612.200 713.600 609.200 714.300 606.500C716.500 604 719.800 603 720.600 605C721.200 607.500 720.200 611.500 719.800 614.300C721.200 610.200 724.500 605 727.800 604.800C730.500 604.800 729.600 609.800 729.300 613.600C730.200 614.600 731.600 614.500 733 613.500" stroke-width="2.400"/><path d="M736.500 610.800C740 610.300 744.800 607 744.200 604C743.500 601.300 738.800 602.800 736.600 606.800C734.300 611.200 735.600 616 739.500 616C742 616 743.800 614.500 745 612.300" stroke-width="2.300"/></g></svg>
<div class="r" style="left:399px;top:627px;width:592px;height:2.2px;background:#0b3a78;"></div>
<span class="t" style="left:462.20px;top:645.90px;font-size:21.2px;line-height:25px;color:#1560bd;letter-spacing:0.106px;">Receba os sinceros agradecimentos de todos da</span>
<svg class="r" style="left:462.2px;top:666.3px;" width="73.6" height="4" viewBox="0 0 73.6 4" fill="none"><path d="M0 2L2.0 0.6L4.0 3.0L6.0 0.6L8.0 3.0L10.0 0.6L12.0 3.0L14.0 0.6L16.0 3.0L18.0 0.6L20.0 3.0L22.0 0.6L24.0 3.0L26.0 0.6L28.0 3.0L30.0 0.6L32.0 3.0L34.0 0.6L36.0 3.0L38.0 0.6L40.0 3.0L42.0 0.6L44.0 3.0L46.0 0.6L48.0 3.0L50.0 0.6L52.0 3.0L54.0 0.6L56.0 3.0L58.0 0.6L60.0 3.0L62.0 0.6L64.0 3.0L66.0 0.6L68.0 3.0L70.0 0.6L72.0 3.0L73.6 0.6" stroke="#e8504c" stroke-width="0.9" stroke-linejoin="round"/></svg>
<svg class="r" style="left:541.9069491666667px;top:666.3px;" width="22.5" height="4" viewBox="0 0 22.5 4" fill="none"><path d="M0 2L2.0 0.6L4.0 3.0L6.0 0.6L8.0 3.0L10.0 0.6L12.0 3.0L14.0 0.6L16.0 3.0L18.0 0.6L20.0 3.0L22.0 0.6L22.5 3.0" stroke="#e8504c" stroke-width="0.9" stroke-linejoin="round"/></svg>
<svg class="r" style="left:570.5066604166666px;top:666.3px;" width="79.7" height="4" viewBox="0 0 79.7 4" fill="none"><path d="M0 2L2.0 0.6L4.0 3.0L6.0 0.6L8.0 3.0L10.0 0.6L12.0 3.0L14.0 0.6L16.0 3.0L18.0 0.6L20.0 3.0L22.0 0.6L24.0 3.0L26.0 0.6L28.0 3.0L30.0 0.6L32.0 3.0L34.0 0.6L36.0 3.0L38.0 0.6L40.0 3.0L42.0 0.6L44.0 3.0L46.0 0.6L48.0 3.0L50.0 0.6L52.0 3.0L54.0 0.6L56.0 3.0L58.0 0.6L60.0 3.0L62.0 0.6L64.0 3.0L66.0 0.6L68.0 3.0L70.0 0.6L72.0 3.0L74.0 0.6L76.0 3.0L78.0 0.6L79.7 3.0" stroke="#e8504c" stroke-width="0.9" stroke-linejoin="round"/></svg>
<svg class="r" style="left:656.2958566666666px;top:666.3px;" width="152.2" height="4" viewBox="0 0 152.2 4" fill="none"><path d="M0 2L2.0 0.6L4.0 3.0L6.0 0.6L8.0 3.0L10.0 0.6L12.0 3.0L14.0 0.6L16.0 3.0L18.0 0.6L20.0 3.0L22.0 0.6L24.0 3.0L26.0 0.6L28.0 3.0L30.0 0.6L32.0 3.0L34.0 0.6L36.0 3.0L38.0 0.6L40.0 3.0L42.0 0.6L44.0 3.0L46.0 0.6L48.0 3.0L50.0 0.6L52.0 3.0L54.0 0.6L56.0 3.0L58.0 0.6L60.0 3.0L62.0 0.6L64.0 3.0L66.0 0.6L68.0 3.0L70.0 0.6L72.0 3.0L74.0 0.6L76.0 3.0L78.0 0.6L80.0 3.0L82.0 0.6L84.0 3.0L86.0 0.6L88.0 3.0L90.0 0.6L92.0 3.0L94.0 0.6L96.0 3.0L98.0 0.6L100.0 3.0L102.0 0.6L104.0 3.0L106.0 0.6L108.0 3.0L110.0 0.6L112.0 3.0L114.0 0.6L116.0 3.0L118.0 0.6L120.0 3.0L122.0 0.6L124.0 3.0L126.0 0.6L128.0 3.0L130.0 0.6L132.0 3.0L134.0 0.6L136.0 3.0L138.0 0.6L140.0 3.0L142.0 0.6L144.0 3.0L146.0 0.6L148.0 3.0L150.0 0.6L152.0 3.0L152.2 0.6" stroke="#e8504c" stroke-width="0.9" stroke-linejoin="round"/></svg>
<svg class="r" style="left:844.4162116666666px;top:666.3px;" width="52.3" height="4" viewBox="0 0 52.3 4" fill="none"><path d="M0 2L2.0 0.6L4.0 3.0L6.0 0.6L8.0 3.0L10.0 0.6L12.0 3.0L14.0 0.6L16.0 3.0L18.0 0.6L20.0 3.0L22.0 0.6L24.0 3.0L26.0 0.6L28.0 3.0L30.0 0.6L32.0 3.0L34.0 0.6L36.0 3.0L38.0 0.6L40.0 3.0L42.0 0.6L44.0 3.0L46.0 0.6L48.0 3.0L50.0 0.6L52.0 3.0L52.3 0.6" stroke="#e8504c" stroke-width="0.9" stroke-linejoin="round"/></svg>
<span class="t" style="left:565.70px;top:671.80px;font-size:21.2px;line-height:25px;color:#1560bd;letter-spacing:0.123px;">equipe da Melhor Empresa</span>
<svg class="r" style="left:665.9540671875001px;top:692.2px;" width="65.4" height="4" viewBox="0 0 65.4 4" fill="none"><path d="M0 2L2.0 0.6L4.0 3.0L6.0 0.6L8.0 3.0L10.0 0.6L12.0 3.0L14.0 0.6L16.0 3.0L18.0 0.6L20.0 3.0L22.0 0.6L24.0 3.0L26.0 0.6L28.0 3.0L30.0 0.6L32.0 3.0L34.0 0.6L36.0 3.0L38.0 0.6L40.0 3.0L42.0 0.6L44.0 3.0L46.0 0.6L48.0 3.0L50.0 0.6L52.0 3.0L54.0 0.6L56.0 3.0L58.0 0.6L60.0 3.0L62.0 0.6L64.0 3.0L65.4 0.6" stroke="#e8504c" stroke-width="0.9" stroke-linejoin="round"/></svg>
<svg class="r" style="left:737.50683359375px;top:692.2px;" width="85.6" height="4" viewBox="0 0 85.6 4" fill="none"><path d="M0 2L2.0 0.6L4.0 3.0L6.0 0.6L8.0 3.0L10.0 0.6L12.0 3.0L14.0 0.6L16.0 3.0L18.0 0.6L20.0 3.0L22.0 0.6L24.0 3.0L26.0 0.6L28.0 3.0L30.0 0.6L32.0 3.0L34.0 0.6L36.0 3.0L38.0 0.6L40.0 3.0L42.0 0.6L44.0 3.0L46.0 0.6L48.0 3.0L50.0 0.6L52.0 3.0L54.0 0.6L56.0 3.0L58.0 0.6L60.0 3.0L62.0 0.6L64.0 3.0L66.0 0.6L68.0 3.0L70.0 0.6L72.0 3.0L74.0 0.6L76.0 3.0L78.0 0.6L80.0 3.0L82.0 0.6L84.0 3.0L85.6 0.6" stroke="#e8504c" stroke-width="0.9" stroke-linejoin="round"/></svg>
<div class="r" style="left:542px;top:807.7px;width:306px;height:2.3px;background:#0c357a;"></div>
<span class="t" style="left:609.20px;top:818.80px;font-size:21.3px;line-height:26px;color:#0c357a;font-weight:700;letter-spacing:0.124px;">FULANO DE TAL</span>
<span class="t" style="left:635.20px;top:844.30px;font-size:17.9px;line-height:21px;color:#0e3a7c;letter-spacing:-0.076px;">Gerente de RH</span>
<svg class="r" style="left:635.2px;top:862.5px;" width="64.2" height="4" viewBox="0 0 64.2 4" fill="none"><path d="M0 2L2.0 0.6L4.0 3.0L6.0 0.6L8.0 3.0L10.0 0.6L12.0 3.0L14.0 0.6L16.0 3.0L18.0 0.6L20.0 3.0L22.0 0.6L24.0 3.0L26.0 0.6L28.0 3.0L30.0 0.6L32.0 3.0L34.0 0.6L36.0 3.0L38.0 0.6L40.0 3.0L42.0 0.6L44.0 3.0L46.0 0.6L48.0 3.0L50.0 0.6L52.0 3.0L54.0 0.6L56.0 3.0L58.0 0.6L60.0 3.0L62.0 0.6L64.0 3.0L64.2 0.6" stroke="#e8504c" stroke-width="0.9" stroke-linejoin="round"/></svg>
<span class="t" style="left:252.10px;top:841.50px;font-size:26px;line-height:31px;color:#0c357a;font-weight:700;">#</span>
<span class="t" style="left:277.70px;top:841.50px;font-size:26px;line-height:31px;color:#0c357a;font-weight:700;letter-spacing:0.011px;">ANIVERSÁRIO</span>
<span class="t" style="left:311.10px;top:872.50px;font-size:26px;line-height:31px;color:#0c357a;font-weight:700;letter-spacing:-0.216px;">DE CASA</span>
<div class="r" style="left:30px;top:950.6px;width:1351px;height:1px;background:#8a8a8a;"></div>
<span class="t" style="left:42.00px;top:961.20px;font-size:18.2px;line-height:22px;color:#ececec;letter-spacing:-0.050px;">Clique para adicionar anotações</span>
<div class="r" style="left:0px;top:993px;width:1687px;height:2px;background:#3e3e3e;"></div>
<div class="r" style="left:0px;top:995px;width:1687px;height:2px;background:#4a4a4a;"></div>
<div class="r" style="left:1381.2px;top:217px;width:1.4px;height:777px;background:#414141;"></div>
<div class="r" style="left:1382.6px;top:217px;width:1px;height:777px;background:#565656;"></div>
<span class="t" style="left:1396.00px;top:231.00px;font-size:18px;line-height:22px;color:#f2f2f2;font-weight:700;letter-spacing:-0.864px;">Seleção</span>
<svg class="r" style="left:1616px;top:235px;" width="18" height="12" viewBox="0 0 18 12" fill="none"><path d="M1.500 2L9 9.500L16.500 2" stroke="#f2f2f2" stroke-width="1.400"/></svg>
<svg class="r" style="left:1658px;top:233px;" width="16" height="16" viewBox="0 0 16 16" fill="none"><path d="M1.500 1.500l13 13M14.500 1.500l-13 13" stroke="#f2f2f2" stroke-width="1.500"/></svg>
<div class="r" style="left:1396px;top:266px;width:110px;height:29px;background:#c0c0c0;box-shadow:0 0 0 1px rgba(150,150,150,.5) inset;"></div>
<span class="t" style="left:1407.00px;top:272.00px;font-size:15px;line-height:18px;color:#262626;letter-spacing:0.053px;">Mostrar Tudo</span>
<div class="r" style="left:1511px;top:266px;width:107px;height:29px;background:#c0c0c0;box-shadow:0 0 0 1px rgba(150,150,150,.5) inset;"></div>
<span class="t" style="left:1522.00px;top:272.00px;font-size:15px;line-height:18px;color:#262626;letter-spacing:0.010px;">Ocultar Tudo</span>
<div class="r" style="left:1615px;top:299px;width:30px;height:30px;background:#c0c0c0;box-shadow:0 0 0 1px rgba(150,150,150,.5) inset;"></div>
<svg class="r" style="left:1623px;top:309px;" width="14" height="10" viewBox="0 0 14 10" fill="none"><path d="M2 7L7 2L12 7" stroke="#262626" stroke-width="1.300"/></svg>
<div class="r" style="left:1649px;top:299px;width:30px;height:30px;background:#c0c0c0;box-shadow:0 0 0 1px rgba(150,150,150,.5) inset;"></div>
<svg class="r" style="left:1657px;top:309px;" width="14" height="10" viewBox="0 0 14 10" fill="none"><path d="M2 2.500L7 7.500L12 2.500" stroke="#262626" stroke-width="1.300"/></svg>
<span class="t" style="left:1418.00px;top:352.50px;font-size:15px;line-height:18px;color:#f0f0f0;letter-spacing:0.114px;">AnoText</span>
<svg class="r" style="left:1622px;top:353.2px;" width="22" height="14.7" viewBox="0 0 24 16" fill="none"><path d="M1.500 9.500C4 3.500 8.500 1.800 12 1.800S20 3.500 22.500 9.500" stroke="#c8c8c8" stroke-width="1.300"/><circle cx="12" cy="9" r="3.600" stroke="#c8c8c8" stroke-width="1.400"/></svg>
<svg class="r" style="left:1653px;top:348.5px;" width="22" height="22" viewBox="0 0 22 22" fill="none"><rect x="1.700" y="9.700" width="14.600" height="10.600" stroke="#f0f0f0" stroke-width="1.400"/><path d="M10.500 9.500V5.800c0-2.300 1.900-4.300 4.500-4.300s4.500 2 4.500 4.300v1.200" stroke="#f0f0f0" stroke-width="1.400"/></svg>
<span class="t" style="left:1418.00px;top:382.50px;font-size:15px;line-height:18px;color:#f0f0f0;letter-spacing:-0.258px;">Ano1</span>
<svg class="r" style="left:1622px;top:383.2px;" width="22" height="14.7" viewBox="0 0 24 16" fill="none"><path d="M1.500 9.500C4 3.500 8.500 1.800 12 1.800S20 3.500 22.500 9.500" stroke="#c8c8c8" stroke-width="1.300"/><circle cx="12" cy="9" r="3.600" stroke="#c8c8c8" stroke-width="1.400"/></svg>
<svg class="r" style="left:1653px;top:378.5px;" width="22" height="22" viewBox="0 0 22 22" fill="none"><rect x="1.700" y="9.700" width="14.600" height="10.600" stroke="#f0f0f0" stroke-width="1.400"/><path d="M10.500 9.500V5.800c0-2.300 1.900-4.300 4.500-4.300s4.500 2 4.500 4.300v1.200" stroke="#f0f0f0" stroke-width="1.400"/></svg>
<span class="t" style="left:1418.00px;top:412.50px;font-size:15px;line-height:18px;color:#f0f0f0;letter-spacing:-0.008px;">Ano2</span>
<svg class="r" style="left:1622px;top:413.2px;" width="22" height="14.7" viewBox="0 0 24 16" fill="none"><path d="M1.500 9.500C4 3.500 8.500 1.800 12 1.800S20 3.500 22.500 9.500" stroke="#c8c8c8" stroke-width="1.300"/><circle cx="12" cy="9" r="3.600" stroke="#c8c8c8" stroke-width="1.400"/></svg>
<svg class="r" style="left:1653px;top:408.5px;" width="22" height="22" viewBox="0 0 22 22" fill="none"><rect x="1.700" y="9.700" width="14.600" height="10.600" stroke="#f0f0f0" stroke-width="1.400"/><path d="M10.500 9.500V5.800c0-2.300 1.900-4.300 4.500-4.300s4.500 2 4.500 4.300v1.200" stroke="#f0f0f0" stroke-width="1.400"/></svg>
<span class="t" style="left:1418.00px;top:442.50px;font-size:15px;line-height:18px;color:#f0f0f0;letter-spacing:-0.261px;">Google Shape;261;p7</span>
<svg class="r" style="left:1622px;top:443.2px;" width="22" height="14.7" viewBox="0 0 24 16" fill="none"><path d="M1.500 9.500C4 3.500 8.500 1.800 12 1.800S20 3.500 22.500 9.500" stroke="#c8c8c8" stroke-width="1.300"/><circle cx="12" cy="9" r="3.600" stroke="#c8c8c8" stroke-width="1.400"/></svg>
<svg class="r" style="left:1653px;top:438.5px;" width="22" height="22" viewBox="0 0 22 22" fill="none"><rect x="1.700" y="9.700" width="14.600" height="10.600" stroke="#f0f0f0" stroke-width="1.400"/><path d="M10.500 9.500V5.800c0-2.300 1.900-4.300 4.500-4.300s4.500 2 4.500 4.300v1.200" stroke="#f0f0f0" stroke-width="1.400"/></svg>
<span class="t" style="left:1418.00px;top:472.50px;font-size:15px;line-height:18px;color:#f0f0f0;letter-spacing:-0.261px;">Google Shape;257;p7</span>
<svg class="r" style="left:1622px;top:473.2px;" width="22" height="14.7" viewBox="0 0 24 16" fill="none"><path d="M1.500 9.500C4 3.500 8.500 1.800 12 1.800S20 3.500 22.500 9.500" stroke="#c8c8c8" stroke-width="1.300"/><circle cx="12" cy="9" r="3.600" stroke="#c8c8c8" stroke-width="1.400"/></svg>
<svg class="r" style="left:1653px;top:468.5px;" width="22" height="22" viewBox="0 0 22 22" fill="none"><rect x="1.700" y="9.700" width="14.600" height="10.600" stroke="#f0f0f0" stroke-width="1.400"/><path d="M10.500 9.500V5.800c0-2.300 1.900-4.300 4.500-4.300s4.500 2 4.500 4.300v1.200" stroke="#f0f0f0" stroke-width="1.400"/></svg>
<span class="t" style="left:1418.00px;top:502.50px;font-size:15px;line-height:18px;color:#f0f0f0;letter-spacing:0.247px;">Nome</span>
<svg class="r" style="left:1622px;top:503.2px;" width="22" height="14.7" viewBox="0 0 24 16" fill="none"><path d="M1.500 9.500C4 3.500 8.500 1.800 12 1.800S20 3.500 22.500 9.500" stroke="#c8c8c8" stroke-width="1.300"/><circle cx="12" cy="9" r="3.600" stroke="#c8c8c8" stroke-width="1.400"/></svg>
<svg class="r" style="left:1653px;top:498.5px;" width="22" height="22" viewBox="0 0 22 22" fill="none"><rect x="1.700" y="9.700" width="14.600" height="10.600" stroke="#f0f0f0" stroke-width="1.400"/><path d="M10.500 9.500V5.800c0-2.300 1.900-4.300 4.500-4.300s4.500 2 4.500 4.300v1.200" stroke="#f0f0f0" stroke-width="1.400"/></svg>
<span class="t" style="left:1418.00px;top:532.50px;font-size:15px;line-height:18px;color:#f0f0f0;letter-spacing:-0.261px;">Google Shape;255;p7</span>
<svg class="r" style="left:1622px;top:533.2px;" width="22" height="14.7" viewBox="0 0 24 16" fill="none"><path d="M1.500 9.500C4 3.500 8.500 1.800 12 1.800S20 3.500 22.500 9.500" stroke="#c8c8c8" stroke-width="1.300"/><circle cx="12" cy="9" r="3.600" stroke="#c8c8c8" stroke-width="1.400"/></svg>
<svg class="r" style="left:1653px;top:528.5px;" width="22" height="22" viewBox="0 0 22 22" fill="none"><rect x="1.700" y="9.700" width="14.600" height="10.600" stroke="#f0f0f0" stroke-width="1.400"/><path d="M10.500 9.500V5.800c0-2.300 1.900-4.300 4.500-4.300s4.500 2 4.500 4.300v1.200" stroke="#f0f0f0" stroke-width="1.400"/></svg>
<span class="t" style="left:1418.00px;top:562.50px;font-size:15px;line-height:18px;color:#f0f0f0;letter-spacing:-0.261px;">Google Shape;254;p7</span>
<svg class="r" style="left:1622px;top:563.2px;" width="22" height="14.7" viewBox="0 0 24 16" fill="none"><path d="M1.500 9.500C4 3.500 8.500 1.800 12 1.800S20 3.500 22.500 9.500" stroke="#c8c8c8" stroke-width="1.300"/><circle cx="12" cy="9" r="3.600" stroke="#c8c8c8" stroke-width="1.400"/></svg>
<svg class="r" style="left:1653px;top:558.5px;" width="22" height="22" viewBox="0 0 22 22" fill="none"><rect x="1.700" y="9.700" width="14.600" height="10.600" stroke="#f0f0f0" stroke-width="1.400"/><path d="M10.500 9.500V5.800c0-2.300 1.900-4.300 4.500-4.300s4.500 2 4.500 4.300v1.200" stroke="#f0f0f0" stroke-width="1.400"/></svg>
<span class="t" style="left:1418.00px;top:592.50px;font-size:15px;line-height:18px;color:#f0f0f0;letter-spacing:-0.261px;">Google Shape;253;p7</span>
<svg class="r" style="left:1622px;top:593.2px;" width="22" height="14.7" viewBox="0 0 24 16" fill="none"><path d="M1.500 9.500C4 3.500 8.500 1.800 12 1.800S20 3.500 22.500 9.500" stroke="#c8c8c8" stroke-width="1.300"/><circle cx="12" cy="9" r="3.600" stroke="#c8c8c8" stroke-width="1.400"/></svg>
<svg class="r" style="left:1653px;top:588.5px;" width="22" height="22" viewBox="0 0 22 22" fill="none"><rect x="1.700" y="9.700" width="14.600" height="10.600" stroke="#f0f0f0" stroke-width="1.400"/><path d="M10.500 9.500V5.800c0-2.300 1.900-4.300 4.500-4.300s4.500 2 4.500 4.300v1.200" stroke="#f0f0f0" stroke-width="1.400"/></svg>
<span class="t" style="left:1418.00px;top:622.50px;font-size:15px;line-height:18px;color:#f0f0f0;letter-spacing:-0.261px;">Google Shape;252;p7</span>
<svg class="r" style="left:1622px;top:623.2px;" width="22" height="14.7" viewBox="0 0 24 16" fill="none"><path d="M1.500 9.500C4 3.500 8.500 1.800 12 1.800S20 3.500 22.500 9.500" stroke="#c8c8c8" stroke-width="1.300"/><circle cx="12" cy="9" r="3.600" stroke="#c8c8c8" stroke-width="1.400"/></svg>
<svg class="r" style="left:1653px;top:618.5px;" width="22" height="22" viewBox="0 0 22 22" fill="none"><rect x="1.700" y="9.700" width="14.600" height="10.600" stroke="#f0f0f0" stroke-width="1.400"/><path d="M10.500 9.500V5.800c0-2.300 1.900-4.300 4.500-4.300s4.500 2 4.500 4.300v1.200" stroke="#f0f0f0" stroke-width="1.400"/></svg>
<span class="t" style="left:1418.00px;top:652.50px;font-size:15px;line-height:18px;color:#f0f0f0;letter-spacing:-0.261px;">Google Shape;251;p7</span>
<svg class="r" style="left:1622px;top:653.2px;" width="22" height="14.7" viewBox="0 0 24 16" fill="none"><path d="M1.500 9.500C4 3.500 8.500 1.800 12 1.800S20 3.500 22.500 9.500" stroke="#c8c8c8" stroke-width="1.300"/><circle cx="12" cy="9" r="3.600" stroke="#c8c8c8" stroke-width="1.400"/></svg>
<svg class="r" style="left:1653px;top:648.5px;" width="22" height="22" viewBox="0 0 22 22" fill="none"><rect x="1.700" y="9.700" width="14.600" height="10.600" stroke="#f0f0f0" stroke-width="1.400"/><path d="M10.500 9.500V5.800c0-2.300 1.900-4.300 4.500-4.300s4.500 2 4.500 4.300v1.200" stroke="#f0f0f0" stroke-width="1.400"/></svg>
<span class="t" style="left:1418.00px;top:682.50px;font-size:15px;line-height:18px;color:#f0f0f0;letter-spacing:-0.261px;">Google Shape;250;p7</span>
<svg class="r" style="left:1622px;top:683.2px;" width="22" height="14.7" viewBox="0 0 24 16" fill="none"><path d="M1.500 9.500C4 3.500 8.500 1.800 12 1.800S20 3.500 22.500 9.500" stroke="#c8c8c8" stroke-width="1.300"/><circle cx="12" cy="9" r="3.600" stroke="#c8c8c8" stroke-width="1.400"/></svg>
<svg class="r" style="left:1653px;top:678.5px;" width="22" height="22" viewBox="0 0 22 22" fill="none"><rect x="1.700" y="9.700" width="14.600" height="10.600" stroke="#f0f0f0" stroke-width="1.400"/><path d="M10.500 9.500V5.800c0-2.300 1.900-4.300 4.500-4.300s4.500 2 4.500 4.300v1.200" stroke="#f0f0f0" stroke-width="1.400"/></svg>
<span class="t" style="left:1418.00px;top:712.50px;font-size:15px;line-height:18px;color:#f0f0f0;letter-spacing:-0.261px;">Google Shape;248;p7</span>
<svg class="r" style="left:1622px;top:713.2px;" width="22" height="14.7" viewBox="0 0 24 16" fill="none"><path d="M1.500 9.500C4 3.500 8.500 1.800 12 1.800S20 3.500 22.500 9.500" stroke="#c8c8c8" stroke-width="1.300"/><circle cx="12" cy="9" r="3.600" stroke="#c8c8c8" stroke-width="1.400"/></svg>
<svg class="r" style="left:1653px;top:708.5px;" width="22" height="22" viewBox="0 0 22 22" fill="none"><rect x="1.700" y="9.700" width="14.600" height="10.600" stroke="#f0f0f0" stroke-width="1.400"/><path d="M10.500 9.500V5.800c0-2.300 1.900-4.300 4.500-4.300s4.500 2 4.500 4.300v1.200" stroke="#f0f0f0" stroke-width="1.400"/></svg>
<span class="t" style="left:1418.00px;top:742.50px;font-size:15px;line-height:18px;color:#f0f0f0;letter-spacing:-0.261px;">Google Shape;247;p7</span>
<svg class="r" style="left:1622px;top:743.2px;" width="22" height="14.7" viewBox="0 0 24 16" fill="none"><path d="M1.500 9.500C4 3.500 8.500 1.800 12 1.800S20 3.500 22.500 9.500" stroke="#c8c8c8" stroke-width="1.300"/><circle cx="12" cy="9" r="3.600" stroke="#c8c8c8" stroke-width="1.400"/></svg>
<svg class="r" style="left:1653px;top:738.5px;" width="22" height="22" viewBox="0 0 22 22" fill="none"><rect x="1.700" y="9.700" width="14.600" height="10.600" stroke="#f0f0f0" stroke-width="1.400"/><path d="M10.500 9.500V5.800c0-2.300 1.900-4.300 4.500-4.300s4.500 2 4.500 4.300v1.200" stroke="#f0f0f0" stroke-width="1.400"/></svg>
<span class="t" style="left:1418.00px;top:772.50px;font-size:15px;line-height:18px;color:#f0f0f0;letter-spacing:-0.261px;">Google Shape;246;p7</span>
<svg class="r" style="left:1622px;top:773.2px;" width="22" height="14.7" viewBox="0 0 24 16" fill="none"><path d="M1.500 9.500C4 3.500 8.500 1.800 12 1.800S20 3.500 22.500 9.500" stroke="#c8c8c8" stroke-width="1.300"/><circle cx="12" cy="9" r="3.600" stroke="#c8c8c8" stroke-width="1.400"/></svg>
<svg class="r" style="left:1653px;top:768.5px;" width="22" height="22" viewBox="0 0 22 22" fill="none"><rect x="1.700" y="9.700" width="14.600" height="10.600" stroke="#f0f0f0" stroke-width="1.400"/><path d="M10.500 9.500V5.800c0-2.300 1.900-4.300 4.500-4.300s4.500 2 4.500 4.300v1.200" stroke="#f0f0f0" stroke-width="1.400"/></svg>
<span class="t" style="left:1418.00px;top:802.50px;font-size:15px;line-height:18px;color:#f0f0f0;letter-spacing:-0.261px;">Google Shape;245;p7</span>
<svg class="r" style="left:1622px;top:803.2px;" width="22" height="14.7" viewBox="0 0 24 16" fill="none"><path d="M1.500 9.500C4 3.500 8.500 1.800 12 1.800S20 3.500 22.500 9.500" stroke="#c8c8c8" stroke-width="1.300"/><circle cx="12" cy="9" r="3.600" stroke="#c8c8c8" stroke-width="1.400"/></svg>
<svg class="r" style="left:1653px;top:798.5px;" width="22" height="22" viewBox="0 0 22 22" fill="none"><rect x="1.700" y="9.700" width="14.600" height="10.600" stroke="#f0f0f0" stroke-width="1.400"/><path d="M10.500 9.500V5.800c0-2.300 1.900-4.300 4.500-4.300s4.500 2 4.500 4.300v1.200" stroke="#f0f0f0" stroke-width="1.400"/></svg>

</body></html>
